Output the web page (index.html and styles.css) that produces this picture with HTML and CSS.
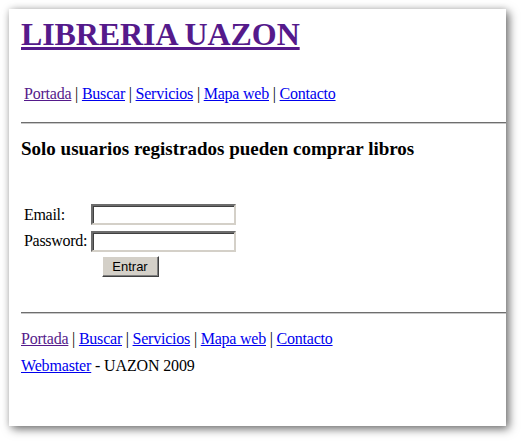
FILE: index.html
```html
<!DOCTYPE html>
<html lang="es">
<head>
<meta charset="utf-8">
<title>LIBRERIA UAZON</title>
<link rel="stylesheet" href="styles.css">
</head>
<body>
<div class="window">
  <h1 class="site-title"><a href="#" class="visited">LIBRERIA UAZON</a></h1>
  <nav class="nav nav-top">
    <a href="#" class="visited">Portada</a> | <a href="#">Buscar</a> | <a href="#">Servicios</a> | <a href="#">Mapa web</a> | <a href="#">Contacto</a>
  </nav>
  <hr class="rule rule-top">
  <h3 class="notice">Solo usuarios registrados pueden comprar libros</h3>
  <form class="login-form" action="#">
    <label class="field-label" for="email">Email:</label>
    <input class="field-input" id="email" type="text">
    <label class="field-label" for="pass">Password:</label>
    <input class="field-input" id="pass" type="password">
    <button class="submit-btn" type="button">Entrar</button>
  </form>
  <hr class="rule rule-bottom">
  <nav class="nav nav-bottom">
    <a href="#" class="visited">Portada</a> | <a href="#">Buscar</a> | <a href="#">Servicios</a> | <a href="#">Mapa web</a> | <a href="#">Contacto</a>
  </nav>
  <p class="credits"><a href="#">Webmaster</a> - UAZON 2009</p>
</div>
</body>
</html>
```
FILE: styles.css
```css
html, body {
  margin: 0;
  padding: 0;
  background: #ffffff;
}

body {
  font-family: "Liberation Serif", "Times New Roman", serif;
  font-size: 16px;
  color: #000000;
}

.window {
  margin: 9px 0 15px 9px;
  width: 497px;
  height: 417px;
  box-sizing: border-box;
  padding: 7px 0 0 12px;
  background: #ffffff;
  overflow: hidden;
  box-shadow: 3px 3px 9px rgba(0, 0, 0, 0.55), 0 0 7px rgba(0, 0, 0, 0.12);
}

a {
  color: #0000ee;
  text-decoration: underline;
}

a.visited {
  color: #551a8b;
}

.site-title {
  margin: 0;
  font-size: 32px;
  line-height: 37px;
  font-weight: bold;
  letter-spacing: -0.1px;
}

.nav {
  line-height: 18px;
  letter-spacing: -0.22px;
}

.nav-top {
  margin: 32px 0 0 0;
  padding-left: 3px;
}

.rule {
  height: 0;
  margin: 0;
  border: 0;
  border-top: 1px solid #6e6e6e;
  border-bottom: 1px solid #c8c8c8;
}

.rule-top {
  margin-top: 19px;
}

.notice {
  margin: 14px 0 0 0;
  font-size: 19px;
  line-height: 22px;
  font-weight: bold;
}

.login-form {
  margin: 44px 0 0 3px;
  display: grid;
  grid-template-columns: 67px 145px;
  grid-auto-rows: 21px;
  row-gap: 5px;
  align-items: center;
  width: 212px;
}

.field-label {
  font-size: 16px;
  line-height: 18px;
  letter-spacing: -0.3px;
}

.field-input {
  width: 145px;
  height: 21px;
  box-sizing: border-box;
  margin: 0;
  padding: 0 2px;
  border: 2px solid;
  border-color: #6c6c6c #d4d0c8 #d4d0c8 #6c6c6c;
  box-shadow: inset 1px 1px 0 #404040;
  background: #ffffff;
  outline: none;
}

.login-form .field-input + .field-label,
.login-form .field-input + .field-label + .field-input {
  margin-top: 1px;
}

.submit-btn {
  grid-column: 1 / span 2;
  justify-self: center;
  width: 57px;
  height: 21px;
  margin: 0;
  padding: 0;
  box-sizing: border-box;
  font-family: "Liberation Sans", Arial, sans-serif;
  font-size: 13px;
  color: #000000;
  background: #d4d0c8;
  border: 1px solid;
  border-color: #ffffff #404040 #404040 #ffffff;
  box-shadow: inset -1px -1px 0 #808080;
}

.rule-bottom {
  margin-top: 35px;
}

.nav-bottom {
  margin-top: 16px;
}

.credits {
  margin: 9px 0 0 0;
  line-height: 18px;
  letter-spacing: -0.15px;
}
```
